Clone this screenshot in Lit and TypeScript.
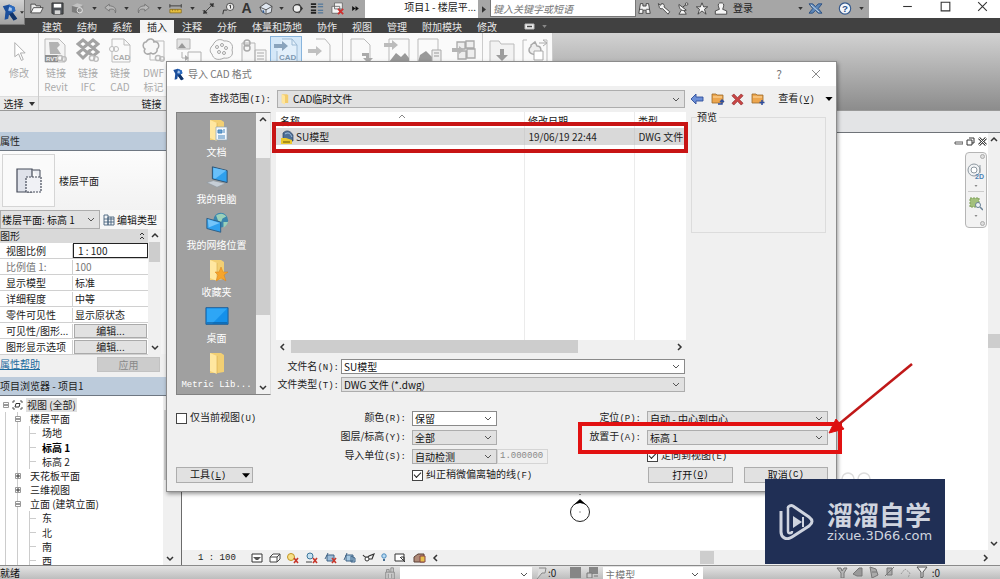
import { LitElement, html, svg, css, nothing } from "lit";
import { customElement, property, state } from "lit/decorators.js";
import { classMap } from "lit/directives/class-map.js";

const revit = svg`<path d="M2 3 9 1 15 4 16 8 13 10 18 17 14 19 9 12 8 17 4 18 5 9Z" fill="#1c4f9c"/><path d="M9 1 15 4 16 8 13 10 9 9 9 4Z" fill="#2d6cc0"/><path d="M9 4 12 5 12 8 8 8Z" fill="#a9c6ea"/><path d="M13 10 18 17 14 19 9 12Z" fill="#123468"/>`;
const gear = svg`<circle cx="16" cy="20" r="2.600" fill="#fafafa" stroke="#bbb" stroke-width="1.500"/><circle cx="20" cy="21" r="2.300" fill="none" stroke="#bbb" stroke-width="1.300"/>`;
const folder = svg`<path d="M5 2h11l3 2v17l-6 1H5Z" fill="#f2cf73"/><path d="M5 2 12 5v18l-7-3Z" fill="#ffe7a0"/><path d="M12 5v18" stroke="#d5a94a" stroke-width=".6"/>`;
const smallFolder = svg`<path d="M1 2h4l1 1h6v8H1Z" fill="#eda64e" stroke="#9b6a2b" stroke-width=".8"/><path d="M2 5h9" stroke="#ffdca4"/>`;
const sheet = svg`<path d="M4 1h12l6 6v17H4Z" fill="#fafafa" stroke="#bdbdbd"/><path d="M16 1v6h6" fill="none" stroke="#bdbdbd"/>`;
const redX = svg`<path d="m8 6 4 5m0-5-4 5" stroke="#c8382c" stroke-width="1.600"/>`;

const art: Record<string, [number, number, unknown]> = {
  revit: [20, 20, revit],
  open: [16, 14, svg`<path d="M1 12V2h5l1 2h5v2" fill="#e8e8e8" stroke="#444"/><path d="m1 12 3-6h11l-3 6Z" fill="#f7f7f7" stroke="#444"/>`],
  save: [14, 14, svg`<path d="M1 1h12v12H2l-1-1Z" fill="#4e5257" stroke="#333"/><path d="M3 2h8v4H3Z" fill="#fff"/><path d="M4 9h6v4H4Z" fill="#d6d6d6"/>`],
  sync: [16, 14, svg`<path d="m1 4 6-3 7 2-5 3Z" fill="#c2c2c2"/><path d="m1 4 8 2v7l-8-2Z" fill="#7c7c7c"/><path d="m9 6 5-3v6l-5 4Z" fill="#989898"/><circle cx="10" cy="9" r="3" fill="none" stroke="#eee"/>`],
  undo: [16, 12, svg`<path d="M6 1 1 5l5 4V7c4-1 7 0 7 4 2-5-2-8-7-8Z" fill="#b9b9b9" stroke="#666" stroke-width=".8"/>`],
  redo: [16, 12, svg`<path d="m10 1 5 4-5 4V7c-4-1-7 0-7 4-2-5 2-8 7-8Z" fill="#b9b9b9" stroke="#666" stroke-width=".8"/>`],
  measure: [16, 14, svg`<path d="M1 2v4m13-4v4M1 4h13" stroke="#333" fill="none"/><path d="M1 8h13v4H1Z" fill="#e6bf3f" stroke="#806312" stroke-width=".8"/><path d="M4 8v2m3-2v2m3-2v2" stroke="#806312" stroke-width=".7"/>`],
  dim: [16, 16, svg`<path d="M2 14 14 2M1 10l5 5M10 1l5 5M2 14l1-4 3 3Zm12-12-4 1 3 3Z" fill="#333" stroke="#333"/>`],
  tag: [16, 16, svg`<circle cx="10" cy="6" r="4.500" fill="#f0f0f0" stroke="#333"/><path d="M9 4.500 10.500 4v4M1 15l1-5h4" fill="none" stroke="#333" stroke-width="1.200"/>`],
  home: [16, 15, svg`<path d="m1 6 7-5 7 4-1 7-6 2-5-3Z" fill="#dfe6ef" stroke="#444"/><path d="m1 6 7 3 7-4M8 9v5" fill="none" stroke="#444"/><path d="m4 9 2 1v3l-2-1Z" fill="#345c93"/>`],
  section: [14, 14, svg`<path d="M9 1 14 7 9 13Z" fill="#333"/><circle cx="7" cy="7" r="4.500" fill="#eee" stroke="#333" stroke-width="1.300"/>`],
  lines: [16, 14, svg`<path d="M1 2h6M1 5h6M1 9h6M1 12h6" stroke="#222" stroke-width="2"/><path d="M9 2h6M9 5h6M9 9h6M9 12h6" stroke="#2f6496"/>`],
  closewin: [16, 15, svg`<path d="M4 1h9v7H4ZM1 5h9v8H1Z" fill="#f4f4f4" stroke="#666"/><path d="m8 8 6 6m0-6-6 6" stroke="#cf2e2e" stroke-width="2"/>`],
  binoc: [16, 16, svg`<path d="M3 2h3v3h4V2h3l2 12h-5v-4H6v4H1Z" fill="#f5f5f5" stroke="#333"/><path d="M2 9h4m4 0h4" stroke="#333"/>`],
  wrench: [16, 16, svg`<path d="M2 5 1 2l3 2 1-2c3 0 4 2 3 4l7 6-2 3-7-7c-2 1-4 0-4-3Z" fill="#f5f5f5" stroke="#333"/>`],
  dish: [16, 16, svg`<path d="M3 3c0 6 4 9 9 7ZM6 10l-3 5h9l-3-5M8 6l4-3" fill="#f5f5f5" stroke="#333"/><circle cx="12.500" cy="2.500" r="1.500" fill="#fff" stroke="#333"/>`],
  star: [16, 16, svg`<path d="m8 1 2 5h5l-4 3 2 6-5-4-5 4 2-6-4-3h5Z" fill="#f5f5f5" stroke="#333"/>`],
  user: [16, 16, svg`<path d="M8 1c3 0 4 2 3 5l-1 3 5 2v4H1v-4l5-2-1-3C4 3 5 1 8 1Z" fill="#f5f5f5" stroke="#333"/>`],
  exch: [16, 14, svg`<path d="M1 2h4l3 3 3-3h4l-4 5 4 5h-4L8 9l-3 3H1l4-5Z" fill="#5b86b8" stroke="#2c4f80"/><path d="m3 3 9 8" stroke="#d4e2f0"/>`],
  help: [16, 16, svg`<circle cx="8" cy="8" r="7" fill="#f3f6fb" stroke="#35598c" stroke-width="1.400"/><text x="8" y="12.500" text-anchor="middle" font-family="Liberation Sans" font-weight="700" font-size="12" fill="#27508c">?</text>`],
  min: [12, 12, svg`<path d="M2 6h8" stroke="#333"/>`],
  max: [12, 12, svg`<path d="M2 2h8v8H2Z" fill="none" stroke="#333"/>`],
  close: [12, 12, svg`<path d="m2 2 8 8m0-8-8 8" stroke="#333"/>`],
  closeGrey: [12, 12, svg`<path d="m2 2 8 8m0-8-8 8" stroke="#8a8a8a"/>`],
  caret: [6, 4, svg`<path d="M0 0h6L3 4Z" fill="#333"/>`],
  caretGrey: [6, 4, svg`<path d="M0 0h6L3 4Z" fill="#888"/>`],
  caretBig: [9, 5, svg`<path d="M0 0h9L4.500 5Z" fill="#000"/>`],
  right: [5, 8, svg`<path d="M0 0v8l5-4Z" fill="#333"/>`],
  more: [8, 6, svg`<path d="m0 0 4 3-4 3Zm4 0 4 3-4 3Z" fill="#111"/>`],
  cursor: [16, 22, svg`<path d="M3 1v15l4-3 3 7 2-1-3-7h5Z" fill="#fff" stroke="#aaa"/>`],
  lrevit: [24, 25, svg`<path d="M1 1h14l6 6v17H1Z" fill="#f4f4f4" stroke="#bbb"/><path d="M5 4h9l2 3-3 3 4 6H6Z" fill="#b3b3b3"/><path d="M1 17h13v7H1Z" fill="#8e8e8e"/><text x="2" y="23" font-family="Liberation Sans" font-weight="700" font-size="6" fill="#eee">RVT</text>${gear}`],
  lifc: [24, 25, svg`<g fill="#fff" stroke="#a3a3a3" stroke-width="3"><path d="m7 2 5 4-5 4-5-4Zm10 0 5 4-5 4-5-4ZM7 11l5 4-5 5-5-5Zm10-1 5 4-5 4-5-4Z"/></g>${gear}`],
  lcad: [25, 25, svg`${sheet}<text x="5" y="22" font-family="Liberation Sans" font-weight="700" font-size="8" fill="#aaa">CAD</text><circle cx="4" cy="11" r="2.500" fill="#fafafa" stroke="#bbb"/><circle cx="8" cy="11" r="2.500" fill="none" stroke="#bbb"/>`],
  ldwf: [24, 25, svg`<path d="M8 3h14v19H8Z" fill="#fafafa" stroke="#bbb"/><path d="M4 4c3-5 8-3 8 0 5-1 6 5 3 7 1 4-4 6-6 4-5 3-8-1-6-4-3-2-2-7 1-7Z" fill="#f7f7f7" stroke="#aaa" stroke-width="1.500"/>${gear}`],
  decal: [26, 25, svg`<path d="M1 1h13v10H1Z" fill="#e4e4e4" stroke="#b5b5b5"/><path d="m2 10 4-5 4 5Z" fill="#999"/><path d="M12 14h13v10H12ZM6 14v6h6" fill="#fafafa" stroke="#b0b0b0"/><path d="m9 17 4 3-4 3Z" fill="#aaa"/>`],
  cloud: [26, 25, svg`<path d="M4 7c2-5 7-7 11-4 6-1 10 4 8 9 2 6-3 9-8 8-6 3-11 1-12-4C0 14 1 9 4 7Z" fill="#f8f8f8" stroke="#aaa"/><g fill="none" stroke="#a5a5a5"><circle cx="8" cy="9" r="1.500"/><circle cx="13" cy="7" r="1.500"/><circle cx="17" cy="10" r="1.500"/><circle cx="10" cy="14" r="1.500"/><circle cx="15" cy="15" r="1.500"/></g>`],
  manage: [26, 25, svg`<path d="M1 5h13v19H1Zm13 7h11v13H14Z" fill="#f6f6f6" stroke="#b5b5b5"/><circle cx="6" cy="5" r="3" fill="none" stroke="#aaa" stroke-width="1.500"/><circle cx="6" cy="10" r="3" fill="none" stroke="#aaa" stroke-width="1.500"/><path d="M16 15h7m-7 3h7m-7 3h7" stroke="#aaa"/>`],
  icad: [26, 25, svg`<path d="M9 1h10l5 6v17H4V13" fill="#e3f0fb" stroke="#9dbad4"/><path d="M19 1v6h5" fill="none" stroke="#9dbad4"/><path d="M1 6h8V3l6 5-6 5v-3H1Z" fill="#8aa4bd"/><text x="6" y="22" font-family="Liberation Sans" font-weight="700" font-size="8" fill="#7f9ab3">CAD</text>`],
  igbxml: [26, 25, svg`<path d="M9 1h9l5 6v17H5" fill="#fafafa" stroke="#bbb"/><path d="M1 11h8V8l6 5-6 5v-3H1Z" fill="#c0c0c0"/>`],
  insert: [26, 25, svg`<path d="M2 1h13l6 6v17H2Z" fill="#fafafa" stroke="#bbb"/><path d="M13 15h7v5h4l-5 5-5-5h3v-2h-4Z" fill="#aaa"/>`],
  image: [26, 25, svg`<path d="M5 1h20v23H5Z" fill="#fafafa" stroke="#bbb"/><path d="M0 5h8V2l6 5-6 5V9H0Z" fill="#bcbcbc"/><path d="m5 24 7-9 5 4 4-4 4 5v4Z" fill="#999"/>`],
  imgmgr: [26, 25, svg`<path d="M1 1h20v23H1Z" fill="#fafafa" stroke="#bbb"/><path d="m1 24 2-7 6-4 6 6v5Z" fill="#999"/><path d="M15 12h9v12h-9Z" fill="#eee" stroke="#aaa"/><path d="M17 15h5m-5 3h5" stroke="#999"/>`],
  family: [26, 25, svg`<path d="M6 4h8v7H6Zm9-1h8v7h-8ZM7 13h8v8H7Zm9-2h8v9h-8Z" fill="#eee" stroke="#aaa" stroke-width="1.300"/><path d="M1 10h7V8l5 4-5 4v-2H1Z" fill="#b5b5b5"/>`],
  load: [26, 25, svg`<path d="M1 3h9l2 3h13v18H1Z" fill="#f2f2f2" stroke="#bbb"/><path d="M11 11h4v6h4l-6 6-6-6h4Z" fill="#9d9d9d"/>`],
  group: [26, 25, svg`<path d="M5 2H1v22h4M21 2h4v22h-4" fill="none" stroke="#bbb"/><path d="m9 7 4-3 2 4c5 0 5 7 1 8s-9 0-9-4 3-2 2-5Z" fill="#eee" stroke="#aaa" stroke-width="1.500"/><path d="M12 13h9v9h-9Z" fill="#fff" stroke="#aaa"/><path d="M17 5h7m-3-3 4 3-4 3" stroke="#aaa" fill="none"/>`],
  back: [14, 12, svg`<path d="m1 6 5-5v3h7v4H6v3Z" fill="#6c8fd6" stroke="#2f4f9c" stroke-width=".9"/>`],
  up: [14, 14, svg`${smallFolder}<path d="M7 12h4V8m-2 2 2-2 2 2" stroke="#2b4da0" fill="none" stroke-width="1.400"/>`],
  del: [14, 14, svg`<path d="M1 3 3 1l4 4 4-4 2 2-4 4 4 4-2 2-4-4-4 4-2-2 4-4Z" fill="#c94646" stroke="#8b2525" stroke-width=".7"/>`],
  newf: [14, 14, svg`${smallFolder}<path d="M11 8v5M8.500 10.500h5" stroke="#2b4da0" stroke-width="1.500"/>`],
  folderTiny: [10, 14, svg`<path d="M1 1h6l2 1v10H1Z" fill="#f3cc6c"/><path d="M1 1 5 3v11l-4-2Z" fill="#ffe59b"/>`],
  docs: [24, 24, svg`${folder}<path d="M11 9h11v13H11Z" fill="#f4f8fc" stroke="#8ba3b8" stroke-width=".7"/><path d="M13 12h4v3h-4Zm5 0h2m-2 2h2m-7 4h7m-7 2h7" stroke="#4585bd" fill="#6aa0cf"/>`],
  pc: [26, 24, svg`<path d="M8 1 24 5v13L8 14Z" fill="#2fa0ee" stroke="#2b4d6b"/><path d="m9 2 14 3-12 9-2-1Z" fill="#69c0fa"/><path d="m2 18 7-2 13 3-9 4Z" fill="#c6ced6" stroke="#8b959e" stroke-width=".6"/>`],
  net: [26, 24, svg`<circle cx="17" cy="9" r="8" fill="#3a86ad"/><path d="M12 4c4-3 8-3 11 1l-4 2-2 5-3-3Zm8 7 5 0c-1 3-3 5-5 6Z" fill="#9bd0b9"/><path d="m2 7 15 4v11L2 18Z" fill="#2fa0ee" stroke="#2b5b83"/><path d="m3 8 13 4L4 17Z" fill="#74c5fa"/>`],
  fav: [24, 24, svg`${folder}<path d="m16 9 2 5 5 0-4 3 2 6-5-3-5 3 2-6-3-3h4Z" fill="#f6a52c" stroke="#d9821b" stroke-width=".5"/>`],
  desk: [26, 22, svg`<path d="M1 2h24v18H1Z" fill="#1490ea" stroke="#1a5a94"/><path d="M2 3h22L8 19H2Z" fill="#2ea6f6"/><path d="M2 18.500h22" stroke="#0b4d8a"/>`],
  folder: [24, 24, folder],
  dwg: [14, 14, svg`<path d="M3 3c3-3 7-3 10 2v6H3Z" fill="#4d6f96" stroke="#2b415e" stroke-width=".7"/><path d="M5 4c3-2 5-1 7 3" stroke="#a7c3df" fill="none"/><path d="M1 8h5l6 2v4H1Z" fill="#ecc92c"/><path d="M3 12h7" stroke="#665409"/>`],
  plan: [26, 26, svg`<path d="M1 1h15v23H1Z" fill="#dfe2ea" stroke="#444a58" stroke-width="1.200"/><path d="M16 2h8v8" fill="#eceef3" stroke="#444a58"/><path d="M10 9h15v15H10Z" fill="#f0f1f5" stroke="#444a58" stroke-width="1.200" stroke-dasharray="2 1"/>`],
  edittype: [12, 12, svg`<path d="M1 1h4v10H1Zm4 2h6v8H5ZM1 5h10M8 3v8M1 8h10" fill="#f4f6f8" stroke="#45607a" stroke-width=".9"/>`],
  viewroot: [11, 10, svg`<path d="M1 3V1h2m5 0h2v2m0 4v2H8M3 9H1V7" fill="none" stroke="#555"/><path d="M4 3.500h4L7 7H3Z" fill="#fff" stroke="#333"/>`],
  chev: [8, 5, svg`<path d="m1 1 3 3 3-3" fill="none" stroke="#555"/>`],
  sUp: [8, 6, svg`<path d="m1 5 3-3 3 3" fill="none" stroke="#333" stroke-width="1.500"/>`],
  sDown: [8, 6, svg`<path d="m1 1 3 3 3-3" fill="none" stroke="#333" stroke-width="1.500"/>`],
  sLeft: [6, 8, svg`<path d="M5 1 2 4l3 3" fill="none" stroke="#333" stroke-width="1.500"/>`],
  sRight: [6, 8, svg`<path d="m1 1 3 3-3 3" fill="none" stroke="#333" stroke-width="1.500"/>`],
  fold: [6, 8, svg`<path d="m1 3 2-2 2 2M1 7l2-2 2 2" fill="none" stroke="#333"/>`],
  sort: [8, 4, svg`<path d="m1 4 3-3 3 3" fill="none" stroke="#888"/>`],
  plus: [6, 6, svg`<path d="M.5.5h5v5h-5Z" fill="#fff" stroke="#999"/><path d="M1 3h4M3 1v4" stroke="#333"/>`],
  minus: [6, 6, svg`<path d="M.5.5h5v5h-5Z" fill="#fff" stroke="#999"/><path d="M1 3h4" stroke="#333"/>`],
  vDetail: [12, 10, svg`<path d="M1 1h10v8H1Z" fill="#fff" stroke="#333"/><path d="M2 4h8L7 7H5Z" fill="#555"/>`],
  vStyle: [12, 10, svg`<path d="M1 4h7v5H1Zm0 0 3-3h7L8 4m3-3v5L8 9" fill="#fff" stroke="#444"/>`],
  vSun: [13, 12, svg`<circle cx="5" cy="5" r="3.500" fill="#f7e08a" stroke="#c19422"/>${redX}`],
  vShadow: [13, 12, svg`<circle cx="5" cy="4" r="3" fill="#c7e1f0" stroke="#3d779c"/><path d="M1 10h6" stroke="#444"/>${redX}`],
  vCrop: [13, 12, svg`<path d="M3 3h7v6H3ZM1 7l3-6" fill="#9cbcd8" stroke="#3e6285"/>${redX}`],
  vRegion: [13, 12, svg`<path d="M3 3h7v6H3ZM1 8l3-7M8 4l4 2v4H8Z" fill="#a7c9e2" stroke="#3e6285"/>`],
  vHide: [13, 12, svg`<path d="M1 3c2 3 5 3 6 1l5-2-2 5H7" fill="none" stroke="#333" stroke-width="1.200"/><circle cx="5" cy="7" r="2" fill="#fff" stroke="#333"/>`],
  vBulb: [8, 12, svg`<circle cx="4" cy="4" r="2.200" fill="#b9dcf4" stroke="#4c8abd"/><path d="M3 7h2v2H3Z" fill="#486e8f"/>`],
  vTemp: [13, 12, svg`<path d="M1 2h9v7H1Z" fill="#fff" stroke="#333"/><path d="m6 5 5 5M7 5h3v4" stroke="#333" fill="none"/>`],
  vAnal: [13, 12, svg`<path d="M1 5 5 2h6v8H1Z" fill="#b08a77" stroke="#5a4136"/><path d="M7 4h5v6H7Z" fill="#e7c04c" stroke="#844"/>`],
  restore: [9, 9, svg`<path d="M3 1h5v5H6M1 3h5v5H1Z" fill="#fff" stroke="#333"/>`],
  mMin: [9, 9, svg`<path d="M1 5h8v2H1Z" fill="#fff" stroke="#333" stroke-width=".8"/>`],
  mClose: [9, 9, svg`<path d="m1 1 7 7m0-7L1 8" stroke="#444" stroke-width="2.600"/><path d="m1 1 7 7m0-7L1 8" stroke="#fff"/>`],
  wheel: [18, 18, svg`<circle cx="7" cy="7" r="6" fill="#f1f3f5" stroke="#8d979f"/><circle cx="7" cy="7" r="3" fill="#fff" stroke="#8d979f"/><path d="M13 2v8" stroke="#8d979f"/><text x="8" y="16" font-family="Liberation Sans" font-weight="700" font-size="7" fill="#4d83b5">2D</text>`],
  zoomreg: [14, 14, svg`<path d="M1 1h9v9H1Z" fill="#a3c07c" stroke="#7c9d59" stroke-dasharray="2 1"/><circle cx="9" cy="8" r="2.500" fill="#eef3f7" stroke="#6b8296"/><path d="m11 10 3 3" stroke="#6b8296" stroke-width="1.500"/>`],
  ring: [5, 5, svg`<circle cx="2.500" cy="2.500" r="2" fill="#ddd" stroke="#aaa"/>`],
  worker: [14, 14, svg`<path d="M2 6h10v8H2Zm1 0V3h3v3m2 0V1h3v5M5 8v5m4-5v5" fill="#ccc" stroke="#888"/>`],
  pin: [12, 14, svg`<path d="M3 2h7l-1 5H6l-5 6" fill="#ddd" stroke="#888"/>`],
  block: [13, 12, svg`<path d="M1 1h11v11H1Z" fill="#868686"/>`],
  blocks: [13, 12, svg`<path d="M3 1h9v7H3Z" fill="#868686"/><path d="M1 7h5v5H1Zm7 3h4" fill="#ccc" stroke="#777"/>`],
  sel1: [12, 12, svg`<path d="M1 2h4l1 3 2-3h3L8 7v5H5V7Z" fill="#b5b5b5" stroke="#777"/>`],
  sel2: [12, 12, svg`<path d="m1 8 6-6h3v8H5Z" fill="#999" stroke="#777"/>`],
  sel3: [12, 12, svg`<path d="M2 1 8 3l2 6-6 3Zm2 5h5" fill="#aaa" stroke="#777"/>`],
  sel4: [12, 12, svg`<path d="M3 2h5v7H3ZM1 10l9-9" fill="#aaa" stroke="#777"/>`],
  sel5: [12, 12, svg`<path d="m1 8 4-5 5 4-2 5" fill="none" stroke="#999" stroke-dasharray="2 1"/>`],
  funnel: [12, 12, svg`<path d="M1 1h10L7 6v5l-2 1V6Z" fill="#eee" stroke="#555"/>`],
  monitor: [11, 7, svg`<path d="M1 1h9v5H1Z" fill="#eee" stroke="#bbb"/><path d="M3 3.500h5" stroke="#444" stroke-width="1.500"/>`],
};

function icon(name: string, w?: number, h?: number) {
  const [vw, vh, body] = art[name];
  return html`<svg aria-hidden="true" width=${w ?? vw} height=${h ?? vh} viewBox="0 0 ${vw} ${vh}">${body}</svg>`;
}

const shared = css`
  :host { display: block; font: 10px/14px "Noto Sans CJK SC", sans-serif; color: #222; }
  *, *::before, *::after { box-sizing: border-box; }
  svg { display: block; flex: none; }
  button, input, select { font: inherit; color: inherit; margin: 0; padding: 0; border: 0; border-radius: 0; background: none; outline: none; min-width: 0; }
  button { display: flex; align-items: center; justify-content: center; white-space: nowrap; }
  .mono { font-family: "Liberation Mono", "Noto Sans CJK SC", monospace; font-size: 9px; }
  .combo { display: grid; align-items: center; min-width: 0; background: #e1e1e1; border: 1px solid #adadad; }
  .combo > * { grid-area: 1 / 1; }
  .combo > select, .combo > input { appearance: none; width: 100%; height: 13px; line-height: 13px; padding: 0 14px 0 2px; color: #111; }
  .combo > svg { justify-self: end; margin-right: 4px; pointer-events: none; }
  .combo.white { background: #fff; border-color: #8a8a8a; }
  .sb { display: flex; flex-direction: column; align-items: center; background: #f0f0f0; }
  .sb.h { flex-direction: row; }
  .sb button { flex: none; width: 12px; height: 12px; }
  .thumb { background: #cdcdcd; align-self: stretch; }
`;

@customElement("import-dialog")
class ImportDialog extends LitElement {
  @state() private place = 0;

  static styles = [shared, css`
    :host { background: #f0f0f0; border: 1px solid #8c8c8c; box-shadow: 1px 2px 4px rgba(0,0,0,.4); }
    .title { display: flex; align-items: center; height: 24px; padding: 0 14px 0 5px; background: #fff; color: #777; }
    .title span { flex: 1; padding-left: 3px; }
    .title button { width: 12px; margin-left: 25px; color: #777; font-size: 12px; }
    .look { display: flex; align-items: center; padding: 4px 4px 4px 9px; }
    .look > label { width: 95px; text-align: right; }
    .look .combo { flex: 1; height: 18px; margin-left: 6px; }
    .look .combo select { height: 16px; line-height: 16px; padding-left: 15px; }
    .look .combo > svg:first-child { justify-self: start; margin-left: 3px; }
    .tools { display: flex; align-items: center; width: 147px; padding-left: 5px; gap: 7px; }
    .tools .view { margin-left: 7px; gap: 10px; }
    .main { display: grid; grid-template-columns: 95px 1fr 135px; gap: 5px; padding: 0 10px 0 9px; height: 283px; }
    .places { display: flex; background: #a0a0a0; border: 1px solid #828282; border-right-color: #ddd; }
    .places ul { flex: 1; display: grid; grid-auto-rows: 1fr; margin: 0; padding: 2px 0 0; list-style: none; }
    .places li button { width: 100%; height: 100%; flex-direction: column; justify-content: flex-start; gap: 3px; padding-top: 3px; color: #fff; }
    .places .sb { width: 14px; }
    .places .thumb { height: 157px; margin-top: 33px; }
    .places .sb button:last-child { margin-top: auto; }
    .mid { display: flex; flex-direction: column; min-width: 0; }
    .list { display: flex; flex-direction: column; flex: 1; background: #fff; overflow: hidden; margin-bottom: 6px; }
    .files { flex: 1; display: grid; grid-template-rows: auto 1fr; background: linear-gradient(#ebebeb, #ebebeb) 248px 0 / 1px 100% no-repeat, linear-gradient(#ebebeb, #ebebeb) 358px 0 / 1px 100% no-repeat; }
    .files table { border-collapse: collapse; table-layout: fixed; width: 100%; white-space: nowrap; }
    .files th { font-weight: 400; text-align: left; height: 16px; padding: 1px 4px 0; vertical-align: middle; }
    .files th > span { display: flex; justify-content: space-between; padding-right: 114px; }
    .files td { padding: 0 4px; overflow: hidden; height: 17px; background: #d9d9d9; }
    .files td + td { border-left: 1px solid #cfcfcf; padding-left: 4px; }
    .files .name { display: flex; align-items: center; gap: 2px; }
    .c1 { width: 248px; } .c2 { width: 110px; }
    .list .sb { height: 13px; }
    .list .sb .thumb { width: 70%; margin: 0 auto 0 3px; }
    .field { display: flex; align-items: center; height: 15px; margin-bottom: 3px; padding-right: 1px; }
    .field > label { width: 63px; margin-right: 2px; text-align: right; white-space: nowrap; }
    .field .combo { flex: 1; }
    fieldset { margin: 0; padding: 0 0 0 5px; height: 121px; border: 1px solid #dcdcdc; min-width: 0; }
    legend { padding: 0 2px 0 0; line-height: 10px; }
    .opts { display: grid; grid-template-columns: 157px 67px 136px 1fr 181px; grid-auto-rows: 16px; gap: 3px 6px; align-items: center; padding: 15px 8px 8px 9px; }
    .opts .lab { text-align: right; white-space: nowrap; }
    .unit { display: flex; }
    .unit .combo, .opts .short { width: 85px; }
    .num { flex: 1; width: 0; border: 1px solid #d5d5d5; color: #888; height: 15px; padding: 0 2px; font-family: "Liberation Mono", monospace; font-size: 9px; }
    .chk { display: flex; align-items: center; gap: 3px; white-space: nowrap; }
    .chk input { appearance: none; width: 11px; height: 11px; border: 1px solid #444; background: #fff; display: grid; place-items: center; }
    .chk input:checked::before { content: ""; width: 7px; height: 4px; margin-top: -2px; border: solid #222; border-width: 0 0 1px 1px; transform: rotate(-45deg); }
    .btn { height: 16px; background: #e1e1e1; border: 1px solid #adadad; color: #111; }
    .tool { width: 77px; justify-content: space-between; padding: 0 2px 0 13px; }
    .acts { display: grid; grid-template-columns: 1fr 1fr; gap: 11px; padding-left: 1px; }
    .c1x { grid-column: 1; } .c2x { grid-column: 2; } .c3x { grid-column: 3; } .c5x { grid-column: 5; }
  `];

  private places: [string, string][] = [["docs", "文档"], ["pc", "我的电脑"], ["net", "我的网络位置"], ["fav", "收藏夹"], ["desk", "桌面"], ["folder", "Metric Lib..."]];

  private lab(id: string, text: string, key: string, cls = "") {
    return html`<label class=${cls} for=${id}>${text}<span class="mono">(${key}):</span></label>`;
  }
  private combo(id: string, value: string, cls = "") {
    return html`<div class="combo ${cls}"><select id=${id}><option>${value}</option></select>${icon("chev")}</div>`;
  }

  render() {
    return html`
      <div class="title">${icon("revit", 13, 13)}<span>导入 CAD 格式</span>
        <button aria-label="帮助">?</button><button aria-label="关闭">${icon("closeGrey")}</button></div>
      <div class="look">
        ${this.lab("look", "查找范围", "I")}
        <div class="combo">${icon("folderTiny", 8, 12)}<select id="look"><option>CAD临时文件</option></select>${icon("chev")}</div>
        <div class="tools">
          <button aria-label="后退">${icon("back")}</button><button aria-label="上一级">${icon("up")}</button>
          <button aria-label="删除">${icon("del", 13, 13)}</button><button aria-label="新建文件夹">${icon("newf")}</button>
          <button class="view"><span>查看<span class="mono">(<u>V</u>)</span></span>${icon("caretBig", 8, 4)}</button>
        </div>
      </div>
      <div class="main">
        <div class="places">
          <ul>${this.places.map(([i, t], n) => html`<li><button aria-pressed=${n === this.place} @click=${() => (this.place = n)}>
            ${icon(i, 24, 24)}<span class=${n === 5 ? "mono" : nothing}>${t}</span></button></li>`)}</ul>
          <div class="sb"><button aria-label="向上">${icon("sUp")}</button><div class="thumb"></div><button aria-label="向下">${icon("sDown")}</button></div>
        </div>
        <div class="mid">
          <div class="list">
            <div class="files">
            <table>
              <colgroup><col class="c1" /><col class="c2" /><col /></colgroup>
              <thead><tr><th><span>名称${icon("sort")}</span></th><th>修改日期</th><th>类型</th></tr></thead>
              <tbody><tr><td><span class="name">${icon("dwg")}SU模型</span></td><td>19/06/19 22:44</td><td>DWG 文件</td></tr></tbody>
            </table></div>
            <div class="sb h"><button aria-label="向左">${icon("sLeft")}</button><div class="thumb"></div><button aria-label="向右">${icon("sRight")}</button></div>
          </div>
          <div class="field">${this.lab("fname", "文件名", "N")}
            <div class="combo white"><input id="fname" value="SU模型" />${icon("chev")}</div></div>
          <div class="field">${this.lab("ftype", "文件类型", "T")}${this.combo("ftype", "DWG 文件 (*.dwg)")}</div>
        </div>
        <fieldset><legend>预览</legend></fieldset>
      </div>
      <div class="opts">
        <label class="chk c1x"><input type="checkbox" /><span>仅当前视图<span class="mono">(U)</span></span></label>
        ${this.lab("color", "颜色", "R", "lab")}${this.combo("color", "保留", "white short")}
        ${this.lab("pos", "定位", "P", "lab")}${this.combo("pos", "自动 - 中心到中心")}
        ${this.lab("layer", "图层/标高", "Y", "lab c2x")}${this.combo("layer", "全部", "short")}
        ${this.lab("level", "放置于", "A", "lab")}${this.combo("level", "标高 1")}
        ${this.lab("unit", "导入单位", "S", "lab c2x")}
        <div class="unit">${this.combo("unit", "自动检测")}<input class="num" aria-label="单位系数" value="1.000000" disabled /></div>
        <label class="chk c5x"><input type="checkbox" checked /><span>定向到视图<span class="mono">(E)</span></span></label>
        <button class="btn tool c1x"><span>工具<span class="mono">(<u>L</u>)</span></span>${icon("caretBig", 8, 5)}</button>
        <label class="chk c3x"><input type="checkbox" checked /><span>纠正稍微偏离轴的线<span class="mono">(F)</span></span></label>
        <div class="acts c5x"><button class="btn">打开<span class="mono">(<u>O</u>)</span></button><button class="btn">取消<span class="mono">(C)</span></button></div>
      </div>`;
  }
}

type Node = { t: string; d: number; open?: boolean; bold?: boolean };

@customElement("side-palettes")
class SidePalettes extends LitElement {
  @property({ attribute: false }) tree: Node[] = [
    { t: "视图 (全部)", d: 0, open: true }, { t: "楼层平面", d: 1, open: true }, { t: "场地", d: 2 }, { t: "标高 1", d: 2, bold: true },
    { t: "标高 2", d: 2 }, { t: "天花板平面", d: 1, open: false }, { t: "三维视图", d: 1, open: false }, { t: "立面 (建筑立面)", d: 1, open: true },
    { t: "东", d: 2 }, { t: "北", d: 2 }, { t: "南", d: 2 }, { t: "西", d: 2 },
  ];

  static styles = [shared, css`
    :host { display: flex; flex-direction: column; background: #f0f0f0; border-right: 1px solid #6b6b6b; overflow: hidden; }
    .head { height: 19px; flex: none; padding: 2px 0 0; background: #bccbdb; border-bottom: 1px solid #6e7782; color: #222; }
    .type { display: flex; align-items: center; gap: 4px; height: 59px; flex: none; padding: 0 0 0 2px; background: linear-gradient(#fcfcfc, #f2f2f2); }
    .type > div { width: 53px; height: 53px; display: grid; place-items: center; border: 1px solid #d5d5d5; background: #fafafa; }
    .inst { display: flex; height: 19px; flex: none; background: #f7f7f7; }
    .inst .combo { width: 100px; }
    .inst .combo select { height: 17px; line-height: 17px; padding-left: 1px; }
    .inst button { gap: 2px; margin-left: 3px; color: #111; }
    .props { display: flex; height: 125px; flex: none; background: #f4f4f4; }
    .props > div:first-child { width: 148px; display: flex; flex-direction: column; }
    .cat { display: flex; justify-content: space-between; align-items: center; height: 16px; padding: 0 3px 0 0; background: #d9d9d9; }
    .rows { flex: 1; display: grid; grid-auto-rows: 1fr; margin: 0; background: #fff; }
    .row { display: grid; grid-template-columns: 73px 1fr; align-items: center; border-bottom: 1px solid #d0d0d0; min-height: 0; }
    .row label { padding-left: 6px; border-right: 1px solid #d0d0d0; white-space: nowrap; }
    .row input { width: 100%; height: 14px; padding: 0 2px; }
    .row.dim { color: #777; }
    .row.cur input { border: 1px solid #222; padding-left: 4px; height: 15px; }
    .row button { height: 14px; margin: 0 1px; background: #e1e1e1; border: 1px solid #aaa; }
    .props .sb { width: 13px; }
    .props .thumb { height: 20px; margin: 1px 1px auto; }
    .foot { display: flex; justify-content: space-between; height: 23px; flex: none; padding: 3px 21px 0 0; }
    .foot a { color: #1c6b9e; }
    .foot button { width: 63px; height: 15px; background: #ccc; border: 1px solid #c2c2c2; color: #888; }
    .tree { flex: 1; display: flex; min-height: 0; padding-right: 5px; background: linear-gradient(#fff, #fff) 0 0 / 163px 100% no-repeat #f0f0f0; }
    .tree ul { flex: 1; display: grid; grid-auto-rows: 1fr; height: 170px; margin: 2px 0 0; padding: 0; list-style: none; }
    .tree li { display: flex; align-items: center; white-space: nowrap; min-height: 0; }
    .tree i { width: 12px; align-self: stretch; flex: none; display: grid; align-items: center; padding-left: 3px; background: linear-gradient(#ccc, #ccc) 5px 0 / 1px 100% no-repeat; }
    .tree i.leaf { background: linear-gradient(#ccc, #ccc) 5px 0 / 1px 100% no-repeat, linear-gradient(#ccc, #ccc) 5px 50% / 7px 1px no-repeat; }
    .tree i.root { background: none; }
    .tree span { padding: 0 2px 0 6px; }
    .tree .d0 span { margin-left: 3px; padding: 0 1px 0 1px; background: #e0e0e0; }
    .bold { font-weight: 700; color: #000; }
    .tree .sb { width: 12px; }
    .tree .thumb { height: 70px; margin: 14px 0 auto; }
  `];

  render() {
    const rows: [string, string, string][] = [["视图比例", "1 : 100", "cur"], ["比例值 1:", "100", "dim"], ["显示模型", "标准", ""], ["详细程度", "中等", ""],
      ["零件可见性", "显示原状态", ""], ["可见性/图形...", "编辑...", "btn"], ["图形显示选项", "编辑...", "btn"]];
    return html`
      <div class="head">属性</div>
      <div class="type"><div>${icon("plan")}</div>楼层平面</div>
      <div class="inst"><div class="combo"><select aria-label="实例"><option>楼层平面: 标高 1</option></select>${icon("chev")}</div>
        <button>${icon("edittype")}编辑类型</button></div>
      <div class="props">
        <div><div class="cat"><span>图形</span>${icon("fold")}</div>
          <div class="rows">${rows.map(([k, v, c], n) => html`<div class="row ${c}"><label for="p${n}">${k}</label>
            ${c === "btn" ? html`<button id="p${n}">${v}</button>` : html`<input id="p${n}" .value=${v} ?readonly=${c === "dim"} />`}</div>`)}</div>
        </div>
        <div class="sb"><button aria-label="向上">${icon("sUp")}</button><div class="thumb"></div><button aria-label="向下">${icon("sDown")}</button></div>
      </div>
      <div class="foot"><a href="#help">属性帮助</a><button disabled>应用</button></div>
      <div class="head">项目浏览器 - 项目1</div>
      <div class="tree">
        <ul>${this.tree.map((n) => html`<li class="d${n.d}">
          ${Array.from({ length: n.d }, () => html`<i></i>`)}
          ${n.open === undefined ? html`<i class="leaf"></i>` : html`<i class=${classMap({ root: n.d === 0 })}>${icon(n.open ? "minus" : "plus")}</i>`}
          ${n.d === 0 ? icon("viewroot") : nothing}<span class=${classMap({ bold: !!n.bold })}>${n.t}</span></li>`)}</ul>
        <div class="sb"><div class="thumb"></div><button aria-label="向下">${icon("sDown")}</button></div>
      </div>`;
  }
}

@customElement("app-root")
class AppRoot extends LitElement {
  @state() private tab = "插入";

  static styles = [shared, css`
    :host { display: flex; flex-direction: column; height: 100vh; position: relative; overflow: hidden; background: #e3e4e6; }
    .bar { display: flex; height: 18px; flex: none; background: #a6a6a6; }
    .app { width: 25px; height: 25px; z-index: 1; gap: 1px; flex: none; background: linear-gradient(#d2d2d2, #a2a2a2); border: 1px solid #777; border-width: 0 1px 1px 0; }
    .qat { display: flex; align-items: center; width: 340px; padding: 0 6px 2px 5px; justify-content: space-between; }
    .qat b { font: 700 14px/14px "Liberation Sans", sans-serif; color: #333; }
    .doc { width: 113px; flex: none; padding-right: 2px; line-height: 13px; text-align: right; background: #fff; }
    .nub { width: 12px; flex: none; }
    .find { width: 146px; flex: none; background: #fff; border: 1px solid #777; border-width: 0 1px 1px; height: 17px; padding: 0 2px; font-style: italic; }
    .find::placeholder { color: #777; }
    .info { display: flex; align-items: center; gap: 5px; flex: 1; padding: 0 5px 2px 1px; color: #222; }
    .info .exch { margin-left: auto; }
    .info .help { margin: 0 2px 0 10px; }
    .win { display: flex; align-items: center; justify-content: space-between; width: 131px; padding: 0 11px 5px 32px; background: #fff; }
    .tabs { display: flex; gap: 1px; height: 15px; flex: none; padding-left: 35px; background: #414141; }
    .tabs button { height: 13px; margin-top: 2px; padding: 0 7px; color: #e8e8e8; }
    .tabs .on { background: #f4f4f4; color: #222; }
    .tabs .mini { gap: 7px; margin-left: 12px; }
    .ribbon { display: flex; height: 78px; flex: none; background: linear-gradient(#d2d2d2, #8c8c8c); border-bottom: 1px solid #999; }
    .panel { display: flex; flex-direction: column; background: #fafafa; border-right: 1px solid #ccc; }
    .panel > div { flex: 1; display: flex; padding: 3px 1px 0; }
    .panel h2 { display: flex; align-items: center; justify-content: center; gap: 5px; margin: 0; height: 14px; background: #ebebeb; border-top: 1px solid #ddd; font: inherit; color: #222; }
    .panel.link > div { padding-right: 5px; }
    .panel.link h2 { padding-right: 78px; }
    .panel button { flex-direction: column; justify-content: flex-start; width: 32px; padding-top: 2px; gap: 3px; color: #aaa; text-align: center; line-height: 14px; white-space: pre-line; }
    .panel .w { width: 35px; }
    .panel .hot { background: #d5e8f8; border: 1px solid #88b4dc; padding-top: 1px; }
    .panel .mod { width: 36px; padding-top: 5px; }
    .gap { height: 22px; flex: none; background: #e3e4e6; border-bottom: 1px solid #6f7378; }
    .work { flex: 1; display: flex; min-height: 0; }
    side-palettes { width: 182px; flex: none; margin-top: -1px; }
    .view { flex: 1; display: flex; flex-direction: column; min-width: 0; background: #fff; }
    .canvas { flex: 1; display: flex; justify-content: flex-end; min-height: 0; }
    .tools { display: flex; flex-direction: column; align-items: flex-end; padding: 4px 1px 0; }
    .mdi { display: flex; gap: 3px; }
    .nav { display: flex; flex-direction: column; align-items: center; justify-content: space-between; width: 22px; height: 76px; margin-top: 6px; padding: 1px 1px; border: 1px solid #b5b5b5; border-radius: 4px; background: #f2f2f2; }
    .nav > svg:first-child, .nav > svg:last-child { align-self: flex-end; }
    .nav hr { width: 16px; margin: 0; border: 0; border-top: 1px solid #ccc; }
    .canvas .sb { width: 12px; }
    .canvas .thumb { height: 14px; margin: 189px 0 auto; }
    .vbar { display: flex; align-items: center; height: 15px; flex: none; padding-left: 16px; background: #f0f0f0; }
    .vbar .ics { display: flex; align-items: center; justify-content: space-between; width: 187px; margin-left: 15px; }
    .vbar .sb { flex: 1; height: 13px; padding-right: 8px; }
    .vbar .thumb { width: 14px; margin: 0 auto 0 262px; }
    .status { display: flex; height: 14px; flex: none; background: linear-gradient(#e4e4e4, #bdbdbd); border-top: 1px solid #8a8a8a; overflow: hidden; }
    .status > * { flex: none; }
    .status .ready { width: 384px; line-height: 13px; color: #111; }
    .status .combo { background: #fff; border: 0; margin: 1px 4px 0; width: 132px; height: 14px; }
    .status .combo select { color: #777; }
    .status .combo.s { width: 100px; }
    .status .two { display: flex; gap: 4px; margin-left: 13px; }
    .status .sel { display: flex; gap: 4px; margin-left: auto; margin-right: 60px; }
    import-dialog { position: absolute; left: 166px; top: 61px; width: 671px; height: 431px; }
    .mark, .elev, .arrow, .brand, .faint { position: absolute; pointer-events: none; }
    .mark { border: 4px solid #c81414; }
    .m1 { left: 272px; top: 122px; width: 416px; height: 31px; }
    .m2 { left: 578px; top: 422px; width: 264px; height: 32px; border-color: #e21111; }
    .elev { left: 569px; top: 494px; }
    .arrow { left: 825px; top: 360px; }
    .faint { left: 840px; top: 470px; }
    .brand { left: 765px; top: 479px; width: 180px; height: 85px; display: flex; align-items: center; gap: 13px; padding-left: 14px; background: #202f55; color: #cfd4df; white-space: nowrap; }
    .brand strong { display: block; font-size: 26px; line-height: 28px; font-weight: 700; }
    .brand small { display: block; font: 13px/15px "DejaVu Sans", sans-serif; }
  `];

  private caret() { return html`<button aria-label="更多">${icon("caret", 5, 3)}</button>`; }
  private rb(name: string, label: string, cls = "") { return html`<button class=${cls} aria-label=${name}>${icon(name)}${label}</button>`; }

  render() {
    const q = (n: string, w = 14) => html`<button aria-label=${n}>${icon(n, w, 13)}</button>`;
    const tabs = ["建筑", "结构", "系统", "插入", "注释", "分析", "体量和场地", "协作", "视图", "管理", "附加模块", "修改"];
    return html`
      <header class="bar">
        <button class="app" aria-label="应用程序菜单">${icon("revit", 18, 21)}${icon("caret", 4, 3)}</button>
        <div class="qat">${q("open")}${q("save", 13)}${q("sync")}${this.caret()}${q("undo")}${this.caret()}${q("redo")}${this.caret()}
          ${q("measure")}${this.caret()}${q("dim", 13)}${q("tag", 13)}<b>A</b>${q("home")}${this.caret()}${q("section", 12)}${q("lines")}${q("closewin")}
          <button aria-label="展开">${icon("more", 7, 5)}</button></div>
        <div class="doc">项目1 - 楼层平...</div>
        <button class="nub" aria-label="下一个">${icon("right", 4, 7)}</button>
        <input class="find" aria-label="搜索" placeholder="键入关键字或短语" />
        <div class="info">${q("binoc", 15)}${q("wrench")}${q("dish")}${q("star")}${q("user")}<span>登录</span>
          <button class="exch" aria-label="登录选项">${icon("caret", 5, 3)}</button>${q("exch", 15)}<span class="help">${q("help")}</span>${this.caret()}</div>
        <div class="win">${["min", "max", "close"].map((n) => html`<button aria-label=${n}>${icon(n, 13, 13)}</button>`)}</div>
      </header>
      <nav class="tabs">${tabs.map((t) => html`<button class=${classMap({ on: t === this.tab })} @click=${() => (this.tab = t)}>${t}</button>`)}
        <button class="mini" aria-label="最小化功能区">${icon("monitor")}${icon("caretGrey", 5, 3)}</button></nav>
      <section class="ribbon">
        <div class="panel"><div><button class="mod">${icon("cursor", 15, 22)}<span>修改</span></button></div><h2>选择 ${icon("caret", 6, 4)}</h2></div>
        <div class="panel link"><div>${this.rb("lrevit", "链接\nRevit")}${this.rb("lifc", "链接\nIFC")}${this.rb("lcad", "链接\nCAD")}${this.rb("ldwf", "DWF\n标记", "w")}
          ${this.rb("decal", "", "w")}${this.rb("cloud", "")}${this.rb("manage", "")}${this.rb("icad", "", "hot")}${this.rb("igbxml", "", "w")}</div><h2>链接</h2></div>
        <div class="panel"><div>${this.rb("insert", "", "w")}${this.rb("image", "", "w")}${this.rb("imgmgr", "")}${this.rb("family", "", "w")}</div><h2></h2></div>
        <div class="panel"><div>${this.rb("load", "", "w")}${this.rb("group", "")}</div><h2></h2></div>
      </section>
      <div class="gap"></div>
      <main class="work">
        <side-palettes></side-palettes>
        <div class="view">
          <div class="canvas">
            <div class="tools">
              <div class="mdi">${["mMin", "restore", "mClose"].map((n) => html`<button aria-label=${n}>${icon(n)}</button>`)}</div>
              <div class="nav">${icon("ring")}${icon("wheel")}${icon("caretGrey", 4, 2)}<hr />${icon("zoomreg")}${icon("caretGrey", 4, 2)}${icon("ring")}</div>
            </div>
            <div class="sb"><button aria-label="向上">${icon("sUp")}</button><div class="thumb"></div><button aria-label="向下">${icon("sDown")}</button></div>
          </div>
          <div class="vbar"><span class="mono">1 : 100</span>
            <div class="ics">${["vDetail", "vStyle", "vSun", "vShadow", "vCrop", "vRegion", "vHide", "vBulb", "vTemp", "vAnal", "sLeft"].map((n) => html`<button aria-label=${n}>${icon(n)}</button>`)}</div>
            <div class="sb h"><div class="thumb"></div><button aria-label="向右">${icon("sRight")}</button></div></div>
        </div>
      </main>
      <footer class="status">
        <span class="ready">就绪</span>${icon("worker", 12, 14)}
        <div class="combo"><select aria-label="工作集"><option></option></select>${icon("chev")}</div>
        ${icon("pin")}<span>:0</span><span class="two">${icon("block")}${icon("blocks")}</span>
        <div class="combo s"><select aria-label="设计选项"><option>主模型</option></select>${icon("chev")}</div>
        <span class="sel">${["sel1", "sel2", "sel3", "sel4", "sel5", "funnel"].map((n) => icon(n))}<span>:0</span></span>
      </footer>
      <svg class="elev" width="22" height="30" viewBox="0 0 22 30"><circle cx="11" cy="18" r="9.500" fill="#fff" stroke="#222" /><path d="M4 11.500 11 5l7 6.500C14 8 8 8 4 11.500Z" fill="#000" /><path d="M11 0v1M10.500 18h1" stroke="#333" /></svg>
      <svg class="faint" width="34" height="20" viewBox="0 0 34 20"><path d="M2 9a6 6 0 0 1 12 0M18 9a6 6 0 0 1 12 0" fill="none" stroke="#ddd" stroke-width="1.500" /></svg>
      <import-dialog></import-dialog>
      <div class="mark m1"></div><div class="mark m2"></div>
      <svg class="arrow" width="90" height="78" viewBox="0 0 90 78"><path d="M87 4 14 64" stroke="#c01818" stroke-width="2.500" /><path d="M4 73 11 59 19 69Z" fill="#dd1010" stroke="#dd1010" /></svg>
      <aside class="brand">
        <svg width="35" height="36" viewBox="0 0 35 36" fill="none" stroke="#cfd4df"><path d="M9 4v23c0 3 4 3 4 0" stroke-width="2.500"/><path d="M9 4c0-2 3-3 5-2l16 11c4 3 4 6 0 9L13 33C7 37 2 33 2 28V7" stroke-width="3"/><path d="M14 12v12l9-6Z" fill="#cfd4df" stroke="none"/><path d="M24 13v10" stroke-width="2"/></svg>
        <div><strong>溜溜自学</strong><small>zixue.3D66.com</small></div>
      </aside>`;
  }
}
